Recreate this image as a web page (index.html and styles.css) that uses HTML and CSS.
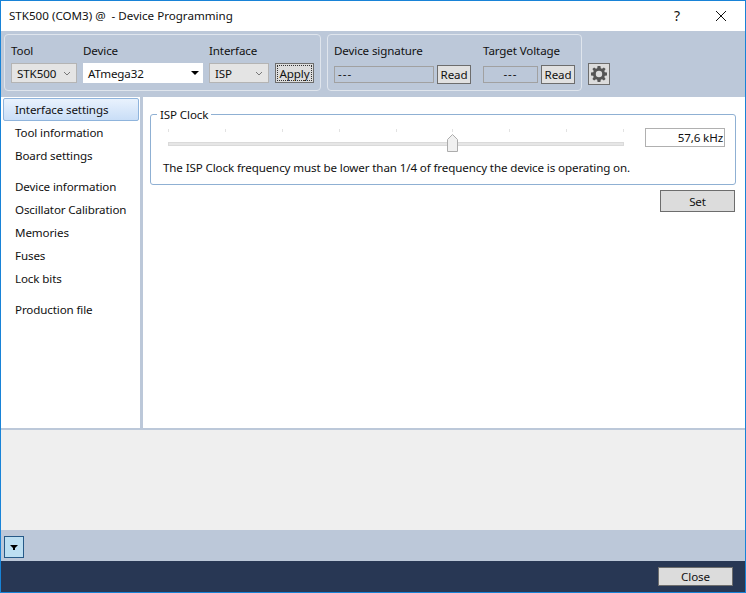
FILE: index.html
```html
<!DOCTYPE html>
<html lang="en">
<head>
<meta charset="utf-8">
<title>Device Programming</title>
<link rel="stylesheet" href="styles.css">
</head>
<body>
<div class="window">
  <header class="titlebar">
    <span class="title">STK500 (COM3) @&nbsp; - Device Programming</span>
    <span class="help">?</span>
    <svg class="close-x" width="12" height="12" viewBox="0 0 12 12"><path d="M1 1l10 10M11 1L1 11" stroke="#111" stroke-width="1" fill="none"/></svg>
  </header>
  <section class="toolbar">
    <div class="group group-tool">
      <div class="field">
        <label>Tool</label>
        <div class="select w-tool"><span>STK500</span><svg class="chev" width="8" height="5" viewBox="0 0 8 5"><path d="M1 1l3 3 3-3" stroke="#777" fill="none"/></svg></div>
      </div>
      <div class="field">
        <label>Device</label>
        <div class="combo"><span>ATmega32</span><svg width="8" height="4" viewBox="0 0 8 4"><path d="M0 0h8L4 4z" fill="#000"/></svg></div>
      </div>
      <div class="field">
        <label>Interface</label>
        <div class="select w-if"><span>ISP</span><svg class="chev" width="8" height="5" viewBox="0 0 8 5"><path d="M1 1l3 3 3-3" stroke="#777" fill="none"/></svg></div>
      </div>
      <button class="btn apply"><span>Apply</span></button>
    </div>
    <div class="group group-sig">
      <div class="field">
        <label>Device signature</label>
        <div class="readrow"><div class="ro w-sig">---</div><button class="btn read">Read</button></div>
      </div>
      <div class="field">
        <label>Target Voltage</label>
        <div class="readrow"><div class="ro w-volt">---</div><button class="btn read">Read</button></div>
      </div>
    </div>
    <button class="gear" aria-label="Settings">
      <svg width="16" height="16" viewBox="0 0 16 16"><path fill="#555" fill-rule="evenodd" d="M6.6 0h2.800l.4 2.200 1.200.5 1.900-1.300 1.700 1.700L13.300 5l.5 1.200 2.200.4v2.800l-2.200.4-.5 1.200 1.300 1.900-1.700 1.700-1.900-1.300-1.200.5-.4 2.200H6.600l-.4-2.200-1.200-.5-1.900 1.300-1.700-1.700L2.700 11l-.5-1.200L0 9.400V6.600l2.200-.4.500-1.200-1.300-1.900 1.700-1.700L5 2.700l1.200-.5zM8 4.800a3.200 3.200 0 1 0 0 6.400 3.200 3.200 0 0 0 0-6.400z"/></svg>
    </button>
  </section>
  <main class="main">
    <nav class="sidebar">
      <ul class="navgroup">
        <li class="active">Interface settings</li>
        <li>Tool information</li>
        <li>Board settings</li>
      </ul>
      <ul class="navgroup">
        <li>Device information</li>
        <li>Oscillator Calibration</li>
        <li>Memories</li>
        <li>Fuses</li>
        <li>Lock bits</li>
      </ul>
      <ul class="navgroup">
        <li>Production file</li>
      </ul>
    </nav>
    <div class="content">
      <fieldset class="clock">
        <legend>ISP Clock</legend>
        <div class="clock-row">
          <div class="slider">
            <div class="ticks"><i></i><i></i><i></i><i></i><i></i><i></i><i></i><i></i><i></i></div>
            <div class="track"></div>
            <svg class="thumb" width="11" height="18" viewBox="0 0 11 18"><path d="M.5 17.500V5.500L5.500.5l5 5v12z" fill="#f0f0f0" stroke="#acacac"/></svg>
          </div>
          <div class="value">57,6 kHz</div>
        </div>
        <p class="note">The ISP Clock frequency must be lower than 1/4 of frequency the device is operating on.</p>
      </fieldset>
      <div class="setrow"><button class="btn wide">Set</button></div>
    </div>
  </main>
  <section class="log"></section>
  <section class="expander">
    <button class="expand" aria-label="Expand"><svg width="8" height="5" viewBox="0 0 8 5"><path d="M0 0h8L5 3v2H3V3z" fill="#000"/></svg></button>
  </section>
  <footer class="footer"><button class="btn wide closebtn">Close</button></footer>
</div>
</body>
</html>
```
FILE: styles.css
```css
* { box-sizing: border-box; }
html, body { margin: 0; padding: 0; }
body { width: 746px; height: 593px; overflow: hidden; background: #fff; font-family: "Noto Sans", "Open Sans", sans-serif; font-size: 11.6px; letter-spacing: -0.12px; color: #111; }
button { font: inherit; letter-spacing: inherit; color: inherit; padding: 0; }
.window { width: 746px; height: 593px; border: 1px solid #1883d7; display: flex; flex-direction: column; background: #fff; }

.titlebar { height: 30px; flex: none; display: flex; align-items: center; padding: 0 18px 1px 8px; }
.title { flex: 1; letter-spacing: 0; }
.help { margin-right: 35px; font-size: 14px; }

.toolbar { height: 66px; flex: none; background: #bcc8d9; display: flex; align-items: flex-start; padding: 3px 0 0 3px; }
.group { height: 57px; border: 1px solid #dfe5ed; border-radius: 4px; display: flex; padding: 9px 0 0 6px; }
.group-tool { width: 317px; margin-right: 6px; }
.group-sig { width: 255px; margin-right: 6px; }
.field { display: flex; flex-direction: column; margin-right: 6px; }
.field label { height: 19px; line-height: 14px; }
.select { height: 20px; background: #e4e4e4; border: 1px solid #b4b4b4; display: flex; align-items: center; justify-content: space-between; padding: 0 5px; }
.w-tool { width: 66px; }
.w-if { width: 60px; }
.combo { width: 120px; height: 20px; background: #fff; display: flex; align-items: center; justify-content: space-between; padding: 0 4px 0 5px; }
.btn { background: #e1e1e1; border: 1px solid #6d6d6d; }
.apply { width: 39px; height: 20px; margin: 19px 0 0; padding: 1px; background: #ddd; }
.apply span { display: block; height: 100%; line-height: 15px; border: 1px dotted #333; }
.group-sig .field { margin-right: 12px; }
.group-sig .field + .field { margin-right: 0; }
.readrow { display: flex; gap: 3px; align-items: flex-start; }
.ro { height: 17px; margin-top: 3px; border: 1px solid #a1a1a1; background: #bcc8d9; line-height: 14px; padding-left: 3px; letter-spacing: 1px; }
.w-sig { width: 100px; }
.w-volt { width: 55px; text-align: center; padding-left: 0; }
.read { width: 34px; height: 19px; margin-top: 2px; line-height: 15px; }
.gear { width: 22px; height: 22px; margin-top: 29px; background: #dcdcdc; border: 1px solid #6d6d6d; display: flex; align-items: center; justify-content: center; }

.main { flex: 1; min-height: 0; display: flex; border-bottom: 2px solid #bcc8d9; }
.sidebar { width: 139px; flex: none; padding: 1px 0 0 2px; }
.navgroup { list-style: none; margin: 0 0 8px; padding: 0; }
.navgroup li { height: 23px; line-height: 23px; padding-left: 12px; }
.navgroup li.active { width: 136px; border: 1px solid #8fb4dc; border-radius: 2px; background: linear-gradient(#e9f2fd, #c9def7); line-height: 21px; padding-left: 11px; }
.content { flex: 1; border-left: 3px solid #bcc8d9; padding: 10px 9px 0 7px; }
.clock { margin: 0; height: 78px; padding: 0 10px 0 12px; border: 1px solid #8fb0d3; border-radius: 3px; }
.clock legend { margin-left: -6px; padding: 1px 3px 0; line-height: 14px; }
.clock-row { display: flex; justify-content: space-between; height: 30px; margin-top: 6px; }
.slider { position: relative; width: 456px; margin-left: 5px; }
.ticks { display: flex; justify-content: space-between; padding-top: 1px; }
.ticks i { width: 1px; height: 3px; background: #e2e2e2; }
.track { height: 4px; margin-top: 10px; background: #e6e6e6; border: 1px solid #dadada; }
.thumb { position: absolute; left: 279px; top: 6px; }
.value { width: 80px; height: 19px; border: 1px solid #b0b0b0; text-align: right; line-height: 17px; padding-right: 1px; }
.note { margin: 2px 0 0; line-height: 16px; }
.setrow { display: flex; justify-content: flex-end; margin: 5px 1px 0 0; }
.wide { width: 75px; height: 22px; background: #dcdcdc; }

.log { height: 100px; flex: none; background: #efefef; }
.expander { height: 31px; flex: none; background: #bcc8d9; padding: 6px 0 0 3px; }
.expand { width: 20px; height: 22px; background: #bcdff2; border: 1px solid #265a88; display: flex; align-items: center; justify-content: center; }
.footer { height: 31px; flex: none; background: #283754; display: flex; justify-content: flex-end; padding: 6px 12px 0 0; }
.closebtn { height: 19px; line-height: 15px; }
```
